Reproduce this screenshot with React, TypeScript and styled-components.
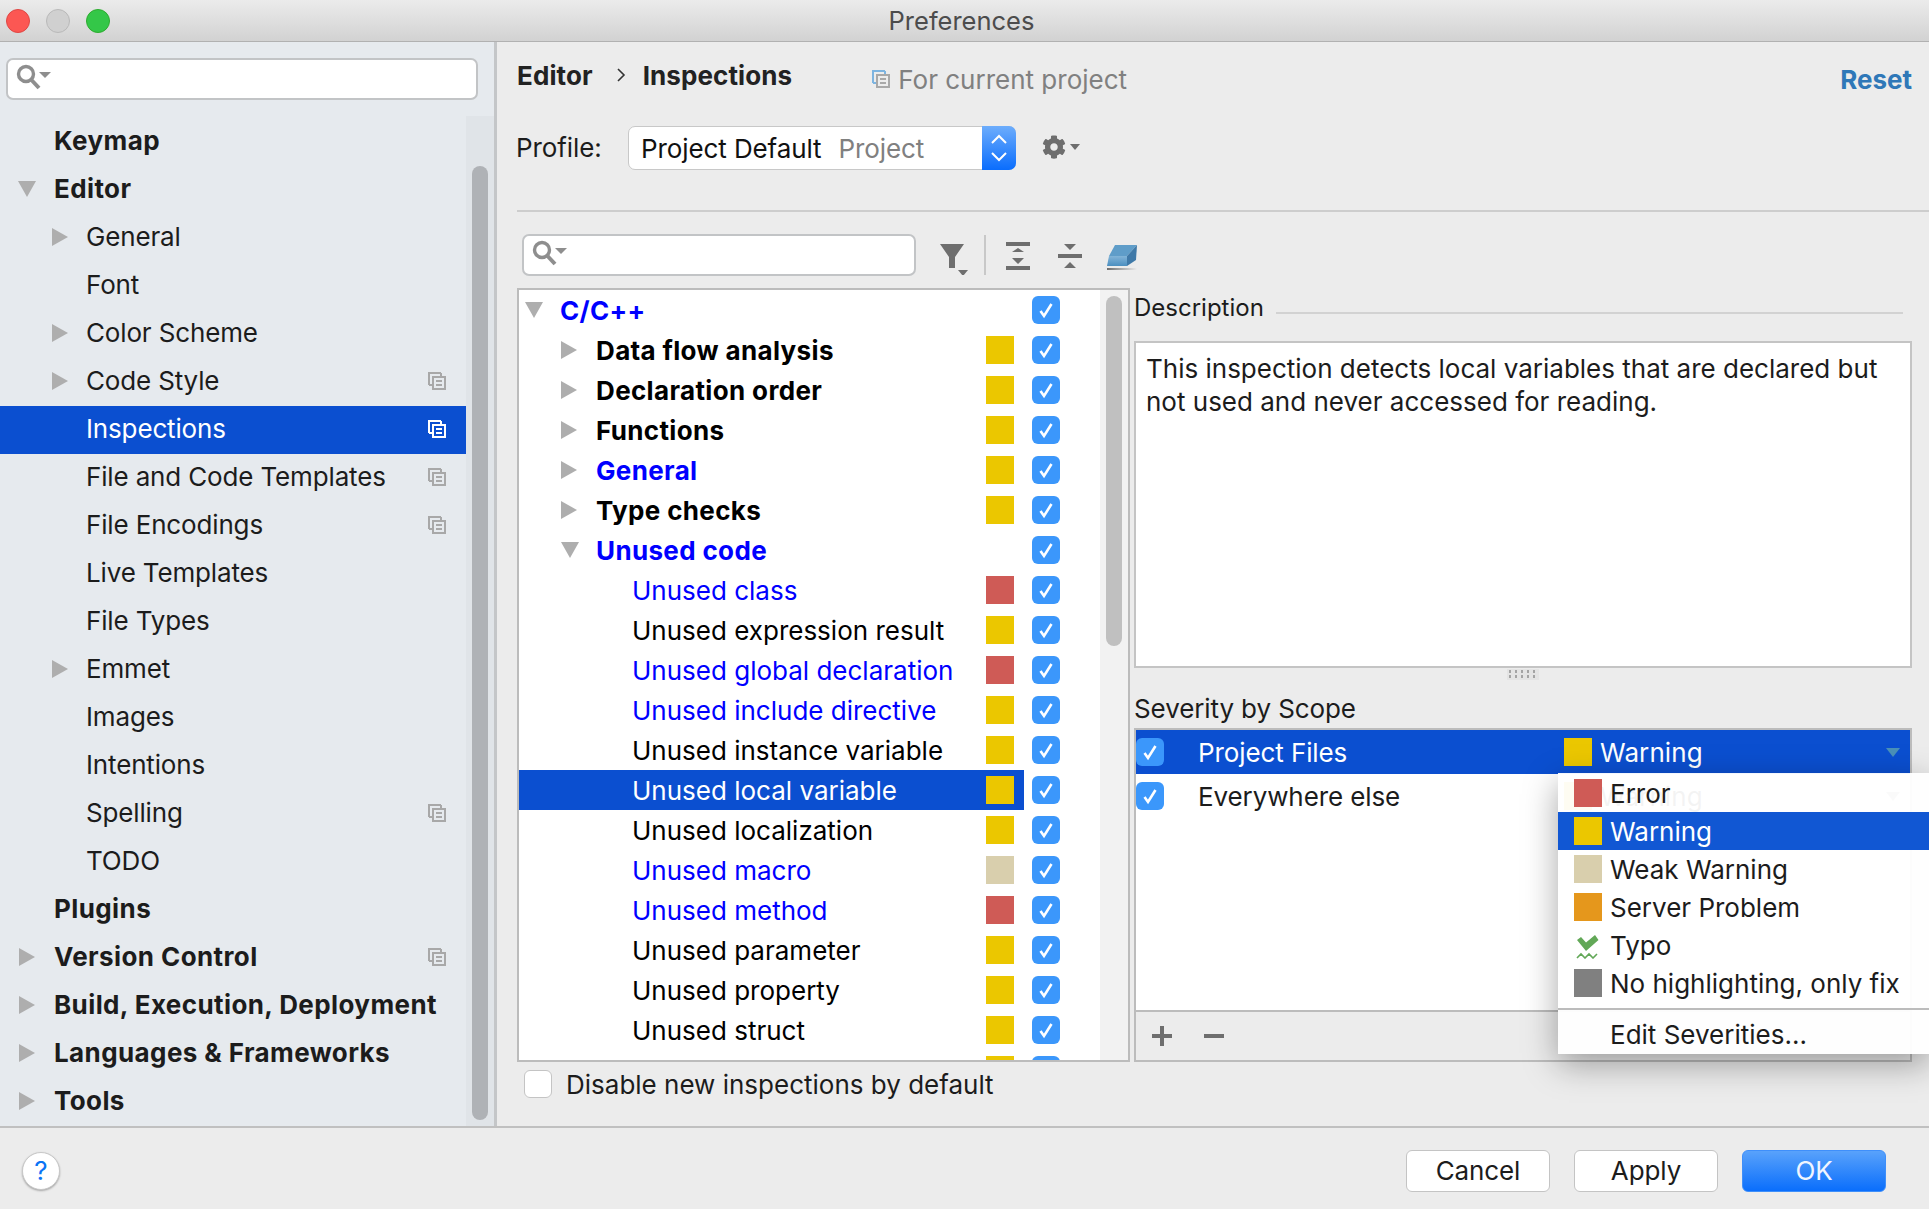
import React from "react";
import styled, { createGlobalStyle } from "styled-components";
import { FaCog } from "react-icons/fa";

const GlobalStyle = createGlobalStyle`
  html, body {
    margin: 0;
    padding: 0;
    background: #ececec;
  }
  * {
    box-sizing: border-box;
  }
`;

const Window = styled.div`
  width: 1929px;
  height: 1209px;
  display: flex;
  flex-direction: column;
  overflow: hidden;
  background: #ececec;
  color: #1c1c1c;
  font-family: Inter, "Liberation Sans", sans-serif;
  font-size: 26px;
`;

const TitleBar = styled.div`
  height: 42px;
  flex: none;
  display: flex;
  align-items: center;
  position: relative;
  padding-left: 6px;
  gap: 16px;
  background: linear-gradient(#ebebeb, #d2d2d2);
  border-bottom: 1px solid #b1b1b1;
`;

const Light = styled.span<{ $bg: string; $edge: string }>`
  width: 24px;
  height: 24px;
  border-radius: 50%;
  background: ${(p) => p.$bg};
  border: 1px solid ${(p) => p.$edge};
`;

const Title = styled.div`
  position: absolute;
  left: 0;
  right: 6px;
  text-align: center;
  color: #4c4c4c;
  font-size: 25.5px;
`;

const Main = styled.div`
  height: 1086px;
  flex: none;
  display: flex;
  border-bottom: 2px solid #c0c0c0;
`;

const Sidebar = styled.div`
  width: 497px;
  flex: none;
  display: flex;
  flex-direction: column;
  background: #e6eaee;
  border-right: 3px solid #c4c6c8;
`;

const SearchWrap = styled.div`
  height: 74px;
  flex: none;
  padding: 16px 0 0 6px;
`;

const SearchBox = styled.div<{ $width: number }>`
  width: ${(p) => p.$width}px;
  height: 42px;
  display: flex;
  align-items: center;
  padding: 0 0 4px 8px;
  background: #fff;
  border: 2px solid #c2c4c6;
  border-radius: 7px;
`;

const Nav = styled.div`
  flex: 1;
  display: flex;
  min-height: 0;
`;

const NavRows = styled.div`
  width: 466px;
  flex: none;
  padding-top: 2px;
`;

const NavRow = styled.div<{ $depth: number; $active?: boolean; $bold?: boolean }>`
  height: 48px;
  display: flex;
  align-items: center;
  padding-left: ${(p) => 17 + p.$depth * 32}px;
  padding-right: 20px;
  padding-bottom: 3px;
  white-space: nowrap;
  font-weight: ${(p) => (p.$bold ? 700 : 400)};
  letter-spacing: ${(p) => (p.$bold ? "0.4px" : "-0.15px")};
  color: ${(p) => (p.$active ? "#fff" : "#1c1c1c")};
  background: ${(p) => (p.$active ? "#0b4fd0" : "transparent")};
`;

const Toggle = styled.span<{ $inset: number }>`
  width: 37px;
  flex: none;
  display: flex;
  align-items: center;
  padding-left: ${(p) => p.$inset}px;
`;

const NavLabel = styled.span`
  flex: 1;
`;

const SideTrack = styled.div`
  width: 28px;
  flex: none;
  padding: 50px 6px 0;
  background: #e0e4e8;
`;

const SideThumb = styled.div`
  width: 16px;
  height: 954px;
  border-radius: 8px;
  background: #afb2b6;
`;

const Content = styled.div`
  flex: 1;
  display: flex;
  flex-direction: column;
  padding: 16px 17px 0 20px;
`;

const Header = styled.div`
  height: 34px;
  display: flex;
  align-items: center;
`;

const Crumb = styled.span`
  font-weight: 700;
  letter-spacing: 0.1px;
  color: #222;
`;

const CrumbArrow = styled.svg`
  width: 10px;
  height: 14px;
  margin: 0 17px 0 23px;
`;

const ProjectNote = styled.span`
  display: flex;
  align-items: center;
  gap: 8px;
  margin: 8px 0 0 80px;
  color: #808080;
`;

const Reset = styled.a`
  margin: 8px 0 0 auto;
  color: #2f78b8;
  font-weight: 700;
`;

const ProfileRow = styled.div`
  height: 44px;
  margin-top: 34px;
  display: flex;
  align-items: center;
`;

const ProfileLabel = styled.span`
  width: 111px;
  flex: none;
  margin: -2px 0 0 -1px;
  letter-spacing: -0.1px;
`;

const Combo = styled.div`
  width: 388px;
  height: 44px;
  margin-left: 1px;
  display: flex;
  background: #fff;
  border: 1px solid #c8c8c8;
  border-radius: 7px;
`;

const ComboText = styled.div`
  flex: 1;
  display: flex;
  align-items: center;
  padding-left: 12px;
  white-space: nowrap;
  letter-spacing: -0.1px;
  color: #111;
`;

const ComboHint = styled.span`
  margin-left: 17px;
  color: #808080;
`;

const ComboButton = styled.div`
  width: 34px;
  flex: none;
  margin: -1px -1px -1px 0;
  display: flex;
  align-items: center;
  justify-content: center;
  background: linear-gradient(#6dadfc, #0a6dfd);
  border-radius: 0 7px 7px 0;
`;

const GearButton = styled.div`
  margin: -2px 0 0 26px;
  display: flex;
  align-items: center;
  gap: 4px;
  color: #6e6e6e;
`;

const Rule = styled.div`
  height: 2px;
  margin-top: 40px;
  margin-right: -17px;
  flex: none;
  background: #cdcdcd;
`;

const FilterRow = styled.div`
  height: 42px;
  margin-top: 22px;
  padding-left: 5px;
  display: flex;
  align-items: center;
`;

const ToolIcon = styled.svg<{ $gap: number }>`
  height: 40px;
  flex: none;
  margin-left: ${(p) => p.$gap}px;
`;

const ToolDivider = styled.span`
  width: 2px;
  height: 40px;
  flex: none;
  margin-left: 16px;
  background: #c8c8c8;
`;

const Body = styled.div`
  margin-top: 12px;
  display: grid;
  grid-template-columns: 613px 778px;
  column-gap: 4px;
`;

const TreePanel = styled.div`
  height: 774px;
  display: flex;
  overflow: hidden;
  background: #fff;
  border: 2px solid #bcbcbc;
`;

const TreeRows = styled.div`
  width: 581px;
  flex: none;
`;

const TreeRow = styled.div`
  height: 40px;
  display: flex;
  align-items: center;
`;

const TreeCell = styled.div<{ $depth: number; $selected?: boolean; $bold?: boolean; $blue?: boolean }>`
  width: 505px;
  height: 40px;
  flex: none;
  display: flex;
  align-items: center;
  padding: 0 10px 0 ${(p) => 6 + p.$depth * 36}px;
  white-space: nowrap;
  font-weight: ${(p) => (p.$bold ? 700 : 400)};
  letter-spacing: ${(p) => (p.$bold ? "0.35px" : "0")};
  color: ${(p) => (p.$selected ? "#fff" : p.$blue ? "#0000ff" : "#000")};
  background: ${(p) => (p.$selected ? "#0b4fd0" : "transparent")};
`;

const TreeToggle = styled.span`
  width: 35px;
  flex: none;
  display: flex;
  align-items: center;
`;

const Swatch = styled.span<{ $color: string }>`
  width: 28px;
  height: 28px;
  flex: none;
  background: ${(p) => p.$color};
`;

const TreeSwatch = styled(Swatch)`
  margin-left: auto;
`;

const Check = styled.span`
  width: 28px;
  height: 28px;
  flex: none;
  display: flex;
  align-items: center;
  justify-content: center;
  background: #3b97fb;
  border-radius: 6px;
`;

const TreeCheck = styled(Check)`
  margin-left: 8px;
`;

const TreeTrack = styled.div`
  width: 28px;
  flex: none;
  padding: 6px;
  background: #f2f2f2;
`;

const TreeThumb = styled.div`
  width: 16px;
  height: 350px;
  border-radius: 8px;
  background: #c0c0c0;
`;

const DisableRow = styled.div`
  margin-top: 8px;
  padding-left: 7px;
  display: flex;
  align-items: center;
  gap: 14px;
  height: 28px;
`;

const EmptyCheck = styled.span`
  width: 28px;
  height: 28px;
  background: #fff;
  border: 1px solid #c4c4c4;
  border-radius: 6px;
`;

const RightColumn = styled.div`
  height: 774px;
  display: flex;
  flex-direction: column;
`;

const DescHeader = styled.div`
  height: 40px;
  margin-bottom: 13px;
  padding-bottom: 2px;
  display: flex;
  align-items: center;
  gap: 12px;
  padding-right: 9px;
  font-size: 24px;
`;

const DescLine = styled.span`
  flex: 1;
  height: 2px;
  margin-top: 12px;
  background: #d2d2d2;
`;

const DescBox = styled.div`
  height: 327px;
  flex: none;
  padding: 9px 10px;
  background: #fff;
  border: 2px solid #c4c4c4;
  line-height: 33px;
  color: #1c1c1c;
`;

const Splitter = styled.div`
  height: 14px;
  flex: none;
  display: flex;
  justify-content: center;
  align-items: flex-start;
`;

const Grip = styled.div`
  width: 32px;
  height: 11px;
  margin-top: 1px;
  background-color: #e4e4e4;
  background-image: radial-gradient(circle, #a4a4a4 1.2px, transparent 1.5px);
  background-size: 6px 5px;
`;

const ScopeTitle = styled.div`
  height: 46px;
  flex: none;
  padding-top: 6px;
  display: flex;
  align-items: center;
  letter-spacing: -0.1px;
  color: #1c1c1c;
`;

const ScopeTable = styled.div`
  flex: 1;
  display: flex;
  flex-direction: column;
  position: relative;
  border: 2px solid #bcbcbc;
`;

const ScopeRows = styled.div`
  flex: 1;
  background: #fff;
`;

const ScopeRow = styled.div<{ $selected?: boolean }>`
  height: 44px;
  display: flex;
  align-items: center;
  padding-right: 10px;
  letter-spacing: -0.1px;
  color: ${(p) => (p.$selected ? "#fff" : "#1c1c1c")};
  background: ${(p) => (p.$selected ? "#0b4fd0" : "#fff")};
`;

const ScopeName = styled.span`
  width: 366px;
  flex: none;
  margin-left: 34px;
`;

const ScopeSeverity = styled.span`
  flex: 1;
  margin-left: 8px;
  letter-spacing: 0.1px;
`;

const ScopeToolbar = styled.div`
  height: 50px;
  flex: none;
  display: flex;
  align-items: center;
  gap: 30px;
  padding-left: 15px;
  background: #ececec;
  border-top: 2px solid #bcbcbc;
`;

const Popup = styled.div`
  position: absolute;
  left: 422px;
  top: 43px;
  width: 371px;
  height: 281px;
  padding-top: 1px;
  background: rgba(255, 255, 255, 0.95);
  box-shadow: 0 10px 32px rgba(0, 0, 0, 0.35);
`;

const PopupItem = styled.div<{ $selected?: boolean }>`
  height: 38px;
  display: flex;
  align-items: center;
  gap: 8px;
  padding-left: 16px;
  color: ${(p) => (p.$selected ? "#fff" : "#1c1c1c")};
  background: ${(p) => (p.$selected ? "#1157d3" : "transparent")};
`;

const PopupRule = styled.div`
  height: 2px;
  margin-top: 6px;
  background: #bcbcbc;
`;

const PopupEdit = styled.div`
  height: 44px;
  padding: 4px 0 0 52px;
  display: flex;
  align-items: center;
  color: #1c1c1c;
`;

const Footer = styled.div`
  flex: 1;
  display: flex;
  align-items: center;
  padding: 4px 43px 0 22px;
  gap: 24px;
`;

const Help = styled.div`
  width: 38px;
  height: 38px;
  margin-right: auto;
  display: flex;
  align-items: center;
  justify-content: center;
  background: #fff;
  border-radius: 50%;
  border: 1px solid #c8c8c8;
  box-shadow: 0 1px 2px rgba(0, 0, 0, 0.3);
  color: #0a74f5;
`;

const Button = styled.button<{ $primary?: boolean }>`
  width: 144px;
  height: 42px;
  padding: 0;
  font: inherit;
  letter-spacing: -0.1px;
  border-radius: 6px;
  color: ${(p) => (p.$primary ? "#f0f5ff" : "#1c1c1c")};
  background: ${(p) => (p.$primary ? "linear-gradient(#59a2fb, #0a6efc)" : "#fff")};
  border: 1px solid ${(p) => (p.$primary ? "#3f8ffa" : "#c4c4c4")};
`;

const TriangleRight = ({ color = "#aeaeae" }: { color?: string }) => (
  <svg width="16" height="18" viewBox="0 0 16 18">
    <path d="M0 0L16 9L0 18Z" fill={color} />
  </svg>
);

const TriangleDown = () => (
  <svg width="18" height="16" viewBox="0 0 18 16">
    <path d="M0 0H18L9 16Z" fill="#aeaeae" />
  </svg>
);

const SearchGlyph = () => (
  <svg width="36" height="26" viewBox="0 0 36 26">
    <circle cx="10" cy="10" r="7.5" fill="none" stroke="#8e8e8e" strokeWidth="3.4" />
    <path d="M15 15.5L23 24" stroke="#8e8e8e" strokeWidth="4" />
    <path d="M23 8H35L29 14Z" fill="#8e8e8e" />
  </svg>
);

const ProjectIcon = ({ tone = "#a8a8a8", back }: { tone?: string; back?: string }) => (
  <svg width="18" height="18" viewBox="0 0 18 18">
    <path d="M1 13V1H13" fill="none" stroke={back || tone} strokeWidth="2" />
    <path d="M1 13H4M13 1V4" fill="none" stroke={back || tone} strokeWidth="2" />
    <rect x="5" y="5" width="12" height="12" fill="none" stroke={tone} strokeWidth="2" />
    <path d="M8 9H14M8 13H14" stroke={tone} strokeWidth="2" />
  </svg>
);

const CheckMark = () => (
  <svg width="18" height="18" viewBox="0 0 18 18">
    <path d="M3.5 10L7 15L14.5 3" fill="none" stroke="#fff" strokeWidth="2.6" />
  </svg>
);

const TypoIcon = () => (
  <svg width="28" height="28" viewBox="0 0 28 28">
    <path d="M3 9L7 6L12 11.5L21 4L24.5 9L12 20Z" fill="#62a857" />
    <path d="M3 27L7 23L11 27L15 23L19 27L23 23" fill="none" stroke="#62a857" strokeWidth="1.6" />
  </svg>
);

const navItems = [
  { label: "Keymap", depth: 0, bold: true },
  { label: "Editor", depth: 0, bold: true, open: true },
  { label: "General", depth: 1, arrow: true },
  { label: "Font", depth: 1 },
  { label: "Color Scheme", depth: 1, arrow: true },
  { label: "Code Style", depth: 1, arrow: true, project: true },
  { label: "Inspections", depth: 1, project: true, active: true },
  { label: "File and Code Templates", depth: 1, project: true },
  { label: "File Encodings", depth: 1, project: true },
  { label: "Live Templates", depth: 1 },
  { label: "File Types", depth: 1 },
  { label: "Emmet", depth: 1, arrow: true },
  { label: "Images", depth: 1 },
  { label: "Intentions", depth: 1 },
  { label: "Spelling", depth: 1, project: true },
  { label: "TODO", depth: 1 },
  { label: "Plugins", depth: 0, bold: true },
  { label: "Version Control", depth: 0, bold: true, arrow: true, project: true },
  { label: "Build, Execution, Deployment", depth: 0, bold: true, arrow: true },
  { label: "Languages & Frameworks", depth: 0, bold: true, arrow: true },
  { label: "Tools", depth: 0, bold: true, arrow: true },
];

const YELLOW = "#ebc700";
const RED = "#cf5b56";
const BEIGE = "#d9cfad";
const ORANGE = "#e5971c";
const GRAY = "#808080";

type TreeItem = {
  label: string;
  depth: number;
  color?: string;
  bold?: boolean;
  blue?: boolean;
  toggle?: "open" | "closed";
  selected?: boolean;
};

const treeItems: TreeItem[] = [
  { label: "C/C++", depth: 0, bold: true, blue: true, toggle: "open" },
  { label: "Data flow analysis", depth: 1, bold: true, toggle: "closed", color: YELLOW },
  { label: "Declaration order", depth: 1, bold: true, toggle: "closed", color: YELLOW },
  { label: "Functions", depth: 1, bold: true, toggle: "closed", color: YELLOW },
  { label: "General", depth: 1, bold: true, blue: true, toggle: "closed", color: YELLOW },
  { label: "Type checks", depth: 1, bold: true, toggle: "closed", color: YELLOW },
  { label: "Unused code", depth: 1, bold: true, blue: true, toggle: "open" },
  { label: "Unused class", depth: 2, blue: true, color: RED },
  { label: "Unused expression result", depth: 2, color: YELLOW },
  { label: "Unused global declaration", depth: 2, blue: true, color: RED },
  { label: "Unused include directive", depth: 2, blue: true, color: YELLOW },
  { label: "Unused instance variable", depth: 2, color: YELLOW },
  { label: "Unused local variable", depth: 2, color: YELLOW, selected: true },
  { label: "Unused localization", depth: 2, color: YELLOW },
  { label: "Unused macro", depth: 2, blue: true, color: BEIGE },
  { label: "Unused method", depth: 2, blue: true, color: RED },
  { label: "Unused parameter", depth: 2, color: YELLOW },
  { label: "Unused property", depth: 2, color: YELLOW },
  { label: "Unused struct", depth: 2, color: YELLOW },
  { label: "", depth: 2, color: YELLOW },
];

const severities = [
  { label: "Error", color: RED },
  { label: "Warning", color: YELLOW, selected: true },
  { label: "Weak Warning", color: BEIGE },
  { label: "Server Problem", color: ORANGE },
  { label: "Typo" },
  { label: "No highlighting, only fix", color: GRAY },
];

const App: React.FC = () => {
  return (
    <Window>
      <GlobalStyle />
      <TitleBar>
        <Light $bg="#fc5753" $edge="#df4744" />
        <Light $bg="#d0d0d0" $edge="#b9b9b9" />
        <Light $bg="#34c748" $edge="#2dac2f" />
        <Title>Preferences</Title>
      </TitleBar>

      <Main>
        <Sidebar>
          <SearchWrap>
            <SearchBox $width={472}>
              <SearchGlyph />
            </SearchBox>
          </SearchWrap>
          <Nav>
            <NavRows>
              {navItems.map((item) => (
                <NavRow key={item.label} $depth={item.depth} $bold={item.bold} $active={item.active}>
                  <Toggle $inset={item.depth === 0 && item.arrow ? 2 : item.depth === 0 ? 1 : 3}>
                    {item.arrow && <TriangleRight />}
                    {item.open && <TriangleDown />}
                  </Toggle>
                  <NavLabel>{item.label}</NavLabel>
                  {item.project && <ProjectIcon tone={item.active ? "#fff" : "#a8a8a8"} />}
                </NavRow>
              ))}
            </NavRows>
            <SideTrack>
              <SideThumb />
            </SideTrack>
          </Nav>
        </Sidebar>

        <Content>
          <Header>
            <Crumb>Editor</Crumb>
            <CrumbArrow viewBox="0 0 10 14">
              <path d="M2 1L8 7L2 13" fill="none" stroke="#333" strokeWidth="1.6" />
            </CrumbArrow>
            <Crumb>Inspections</Crumb>
            <ProjectNote>
              <ProjectIcon tone="#a8a8a8" back="#7db4e0" />
              For current project
            </ProjectNote>
            <Reset>Reset</Reset>
          </Header>

          <ProfileRow>
            <ProfileLabel>Profile:</ProfileLabel>
            <Combo>
              <ComboText>
                Project Default
                <ComboHint>Project</ComboHint>
              </ComboText>
              <ComboButton>
                <svg width="16" height="28" viewBox="0 0 16 28">
                  <path d="M1 9L8 2L15 9M1 19L8 26L15 19" fill="none" stroke="#fff" strokeWidth="2" />
                </svg>
              </ComboButton>
            </Combo>
            <GearButton>
              <FaCog size={24} />
              <svg width="10" height="6" viewBox="0 0 10 6">
                <path d="M0 0H10L5 6Z" fill="#6e6e6e" />
              </svg>
            </GearButton>
          </ProfileRow>

          <Rule />

          <FilterRow>
            <SearchBox $width={394}>
              <SearchGlyph />
            </SearchBox>
            <ToolIcon $gap={24} width="28" viewBox="0 0 28 40">
              <path d="M0 9H24L15 22V33H9V22Z" fill="#6e6e6e" />
              <path d="M18 35H28L23 41Z" fill="#6e6e6e" />
            </ToolIcon>
            <ToolDivider />
            <ToolIcon $gap={20} width="24" viewBox="0 0 24 40">
              <path d="M0 7H24V11H0ZM0 31H24V35H0ZM12 13L18 17H6ZM6 23H18L12 29Z" fill="#6e6e6e" />
            </ToolIcon>
            <ToolIcon $gap={28} width="24" viewBox="0 0 24 40">
              <path d="M0 19H24V23H0ZM6 9H18L12 15ZM12 27L18 33H6Z" fill="#6e6e6e" />
            </ToolIcon>
            <ToolIcon $gap={25} width="30" viewBox="0 0 30 40">
              <defs>
                <linearGradient id="eraserFront" x1="0" y1="0" x2="0" y2="1">
                  <stop offset="0" stopColor="#82b4d8" />
                  <stop offset="1" stopColor="#4b8fc0" />
                </linearGradient>
                <linearGradient id="eraserShadow" x1="0" y1="0" x2="1" y2="0">
                  <stop offset="0" stopColor="#6e6e6e" />
                  <stop offset="1" stopColor="#6e6e6e" stopOpacity="0" />
                </linearGradient>
              </defs>
              <path d="M8 10H30L20 21H2Z" fill="#5f9dc9" />
              <path d="M2 21H20V31H0Z" fill="url(#eraserFront)" />
              <path d="M30 10L29 25L20 31V21Z" fill="#3f79a8" />
              <rect x="0" y="33" width="30" height="2" fill="url(#eraserShadow)" />
            </ToolIcon>
          </FilterRow>

          <Body>
            <div>
              <TreePanel>
                <TreeRows>
                  {treeItems.map((item, i) => (
                    <TreeRow key={i}>
                      <TreeCell $depth={item.depth} $bold={item.bold} $blue={item.blue} $selected={item.selected}>
                        <TreeToggle>
                          {item.toggle === "open" && <TriangleDown />}
                          {item.toggle === "closed" && <TriangleRight />}
                        </TreeToggle>
                        {item.label}
                        {item.color && <TreeSwatch $color={item.color} />}
                      </TreeCell>
                      <TreeCheck>
                        <CheckMark />
                      </TreeCheck>
                    </TreeRow>
                  ))}
                </TreeRows>
                <TreeTrack>
                  <TreeThumb />
                </TreeTrack>
              </TreePanel>
              <DisableRow>
                <EmptyCheck />
                Disable new inspections by default
              </DisableRow>
            </div>

            <RightColumn>
              <DescHeader>
                Description
                <DescLine />
              </DescHeader>
              <DescBox>
                This inspection detects local variables that are declared but
                <br />
                not used and never accessed for reading.
              </DescBox>
              <Splitter>
                <Grip />
              </Splitter>
              <ScopeTitle>Severity by Scope</ScopeTitle>
              <ScopeTable>
                <ScopeRows>
                  <ScopeRow $selected>
                    <Check>
                      <CheckMark />
                    </Check>
                    <ScopeName>Project Files</ScopeName>
                    <Swatch $color={YELLOW} />
                    <ScopeSeverity>Warning</ScopeSeverity>
                    <svg width="14" height="9" viewBox="0 0 14 9">
                      <path d="M0 0H14L7 9Z" fill="#4a90b8" />
                    </svg>
                  </ScopeRow>
                  <ScopeRow>
                    <Check>
                      <CheckMark />
                    </Check>
                    <ScopeName>Everywhere else</ScopeName>
                    <Swatch $color={YELLOW} />
                    <ScopeSeverity>Warning</ScopeSeverity>
                    <svg width="14" height="9" viewBox="0 0 14 9">
                      <path d="M0 0H14L7 9Z" fill="#a0a0a0" />
                    </svg>
                  </ScopeRow>
                </ScopeRows>
                <ScopeToolbar>
                  <svg width="22" height="22" viewBox="0 0 22 22">
                    <path d="M9 1H13V9H21V13H13V21H9V13H1V9H9Z" fill="#6e6e6e" />
                  </svg>
                  <svg width="22" height="22" viewBox="0 0 22 22">
                    <path d="M1 9H21V13H1Z" fill="#6e6e6e" />
                  </svg>
                </ScopeToolbar>
                <Popup>
                  {severities.map((s) => (
                    <PopupItem key={s.label} $selected={s.selected}>
                      {s.color ? <Swatch $color={s.color} /> : <TypoIcon />}
                      {s.label}
                    </PopupItem>
                  ))}
                  <PopupRule />
                  <PopupEdit>Edit Severities...</PopupEdit>
                </Popup>
              </ScopeTable>
            </RightColumn>
          </Body>
        </Content>
      </Main>

      <Footer>
        <Help>?</Help>
        <Button>Cancel</Button>
        <Button>Apply</Button>
        <Button $primary>OK</Button>
      </Footer>
    </Window>
  );
};

export default App;
